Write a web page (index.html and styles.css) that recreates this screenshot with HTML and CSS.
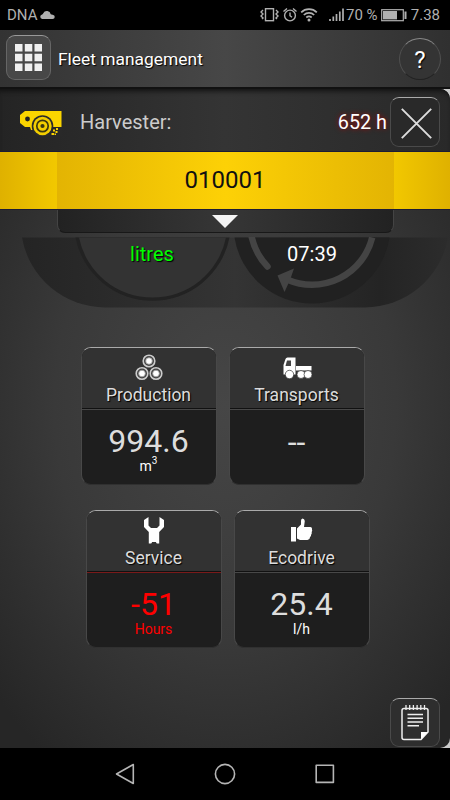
FILE: index.html
```html
<!DOCTYPE html>
<html lang="en">
<head>
  <meta charset="UTF-8" />
  <title>Fleet management</title>
  <link rel="stylesheet" href="styles.css">
</head>
<body>

  <!-- phone status bar -->
  <div class="status">
    <span class="carrier">DNA</span>
    <svg class="cloud" width="16" height="10" viewBox="0 0 15 10" preserveAspectRatio="none"><path d="M3 9h9.500a2 2 0 0 0 .3-4.200Q11.500 4.600 11 4.200A3.700 3.700 0 0 0 4 3.200Q3.600 4.300 3 4.500A2.300 2.300 0 0 0 3 9z" fill="#b0b0b0"/></svg>
    <svg class="status-icons" width="85" height="16" viewBox="0 0 85 16" fill="none" stroke="#b0b0b0" stroke-width="1.400">
      <rect x="5.500" y="1.700" width="8" height="12"/>
      <path d="M3 3l-2 2 2 2-2 2 2 2-1 1M16 3l2 2-2 2 2 2-2 2 1 1"/>
      <circle cx="30" cy="8.500" r="5.400"/>
      <path d="M30 5.500v3.200l2 1.500M23.500 4.500l3.500-3M36.500 4.500l-3.500-3"/>
      <path d="M41.200 5.300a11 11 0 0 1 15.600 0M43.800 8a7.500 7.500 0 0 1 10.400 0M46.300 10.500a4 4 0 0 1 5.400 0" stroke-width="1.700"/>
      <circle cx="49" cy="13" r="1.500" fill="#b0b0b0" stroke="none"/>
      <path d="M70 14v-2M73.300 14V9.500M76.500 14V7M79.800 14V4.500M83 14V1.500" stroke-width="1.700"/>
    </svg>
    <span class="percent">70 %</span>
    <svg class="battery" width="26" height="13" viewBox="0 0 26 13"><rect x=".7" y=".7" width="21.600" height="11" fill="none" stroke="#b0b0b0" stroke-width="1.200"/><rect x="2" y="2" width="14" height="8.400" fill="#b0b0b0"/><path d="M24.500 2.500v7.500" stroke="#b0b0b0" stroke-width="2"/></svg>
    <span class="clock">7.38</span>
  </div>

  <div class="header">
    <div class="btn menu-btn">
      <svg width="27" height="27" viewBox="0 0 27 27"><path d="M0 0h7.500v7.500H0zM9.800 0h7.500v7.500H9.800zM19.500 0H27v7.500h-7.500zM0 9.800h7.500v7.500H0zM9.800 9.800h7.500v7.500H9.800zM19.500 9.800H27v7.500h-7.500zM0 19.500h7.500V27H0zM9.800 19.500h7.500V27H9.800zM19.500 19.500H27V27h-7.500z" fill="#f0f0f0"/></svg>
    </div>
    <h1>Fleet management</h1>
    <div class="help">?</div>
  </div>

  <div class="page">
    <div class="content">
      <div class="machine">
        <svg class="harvester" width="42" height="26" viewBox="0 0 42 26">
          <path d="M5 1h36.500v16H34l-1 3H11l-1-3H5L0 13V5z" fill="#fbd500"/>
          <circle cx="7.500" cy="9" r="2.400" fill="#222"/>
          <path d="M28 17h14v9H28z" fill="#292929"/>
          <circle cx="22.500" cy="16" r="10.800" fill="#2b2b2b"/>
          <circle cx="22.500" cy="16" r="9.200" fill="#f3ce00"/>
          <circle cx="22.500" cy="16" r="5.700" fill="none" stroke="#3b3710" stroke-width="1.700"/>
          <circle cx="22.500" cy="16" r="2.100" fill="#3b3710"/>
          <path d="M33 19.500h2v2h-2zM36 18h2v2h-2zM35.500 21h2v2h-2zM31.500 23h2.500v2h-2.500zM34.500 23.500H36V25h-1.500z" fill="#fbd500"/>
        </svg>
        <span class="machine-name">Harvester:</span>
        <span class="machine-hours">652 h</span>
        <div class="btn close-btn">
          <svg width="31" height="31" viewBox="0 0 31 31"><path d="M.8.8l29.400 29.400M30.200.8L.8 30.200" stroke="#ddd" stroke-width="1.900"/></svg>
        </div>
      </div>

      <div class="band"><div class="band-mid">010001</div></div>
      <div class="tab">
        <svg width="26" height="13" viewBox="0 0 26 13"><path d="M0 0h26L13 13z" fill="#f4f4f4"/></svg>
      </div>

      <!-- lower half of the gauges -->
      <div class="gauges">
        <svg class="dials" width="450" height="71" viewBox="0 237 450 71">
          <defs>
            <linearGradient id="shell" gradientUnits="userSpaceOnUse" x1="22" x2="448" y1="0" y2="0">
              <stop offset="0" stop-color="#242424"/><stop offset=".5" stop-color="#343434"/><stop offset=".84" stop-color="#242424"/><stop offset="1" stop-color="#2c2c2c"/>
            </linearGradient>
          </defs>
          <path d="M22 237.500A84.500 84.500 0 0 0 105 307.500H365A84.500 84.500 0 0 0 448 237.500z" fill="url(#shell)"/>
          <path d="M75.500 237.500A78.500 78.500 0 0 0 229.500 237.500z" fill="#222"/>
          <path d="M79 237.500A75 75 0 0 0 226 237.500z" fill="#333"/>
          <path d="M234.500 237.500A78.500 78.500 0 0 0 389.500 237.500z" fill="#212121"/>
          <path d="M251.800 237.500A62 62 0 0 0 267.500 266.500" fill="none" stroke="#444" stroke-width="6.500" stroke-linecap="round"/>
          <path d="M372.200 237.500A62 62 0 0 1 287 279.500" fill="none" stroke="#444" stroke-width="6.500"/>
          <path d="M277.500 275.500L294 268.500 290 280 284.500 292z" fill="#444"/>
        </svg>
        <span class="dial-text litres">litres</span>
        <span class="dial-text">07:39</span>
      </div>

      <div class="tiles">
        <div class="tile">
          <div class="tile-head">
            <svg width="28" height="28" viewBox="0 0 28 28" fill="#fff" stroke="#ccc" stroke-width="1.600">
              <g fill="#444"><circle cx="14" cy="7" r="5.800"/><circle cx="7" cy="19.500" r="5.800"/><circle cx="21" cy="19.500" r="5.800"/></g>
              <g stroke="#999" stroke-width=".8"><circle cx="14" cy="7" r="3.300"/><circle cx="7" cy="19.500" r="3.300"/><circle cx="21" cy="19.500" r="3.300"/></g>
            </svg>
            <span>Production</span>
          </div>
          <div class="tile-body"><b>994.6</b><small>m<sup>3</sup></small></div>
        </div>
        <div class="tile">
          <div class="tile-head">
            <svg width="30" height="28" viewBox="0 0 30 28" fill="#fff">
              <path d="M1.500 20.500V11l2-6q.5-1.500 2-1.500h8V20.500z"/>
              <path d="M3.500 12l1.500-5.500H9V12z" fill="#444"/>
              <path d="M14 12h15.500v4.500H14z"/>
              <g stroke="#333" stroke-width=".7"><circle cx="7.500" cy="20.500" r="4.200"/><circle cx="19" cy="20.500" r="4"/><circle cx="26" cy="20.500" r="4"/></g>
            </svg>
            <span>Transports</span>
          </div>
          <div class="tile-body"><b class="empty">--</b></div>
        </div>
      </div>

      <div class="tiles second">
        <div class="tile">
          <div class="tile-head late">
            <svg width="22" height="28" viewBox="0 0 22 28"><path d="M5.500 0L1 3v7l4.800 5v11.500h2.400l1-1.500h3.600l1 1.500h2.400V15L21 10V3l-4.500-3v8.500L14 11H8L5.500 8.500z" fill="#fff"/></svg>
            <span>Service</span>
          </div>
          <div class="tile-body alert"><b>-51</b><small>Hours</small></div>
        </div>
        <div class="tile">
          <div class="tile-head">
            <svg width="24" height="28" viewBox="0 0 24 28"><path d="M1 10h5v14.500H1zM7 11.500l4-4V4Q11 1.500 12.500 1.500q2 0 2.300 2.500L14 10h6.500q2 .3 1.500 2.500.6 1.400-.3 2.500.4 1.600-.6 2.700.2 1.500-1 2.300-.2 2.700-2.600 3H10L7 21.500z" fill="#fff"/></svg>
            <span>Ecodrive</span>
          </div>
          <div class="tile-body"><b>25.4</b><small>l/h</small></div>
        </div>
      </div>

      <div class="btn notes-btn">
        <svg width="30" height="37" viewBox="0 0 30 37" fill="none" stroke="#eee" stroke-width="1.500">
          <path d="M4 4.500H26q2 0 2 2V28l-7 7.500H4q-2 0-2-2V6.500q0-2 2-2z"/>
          <path d="M21 35.500V28h7z" fill="#fff" stroke="none"/>
          <path d="M6 1v5M9.700 1v5M13.400 1v5M17.100 1v5M20.800 1v5M24.500 1v5" stroke-width="1.300"/>
          <path d="M7.500 10.500h15.500M7.500 14.200h15.500M7.500 18h15.500M7.500 21.700h11.500"/>
        </svg>
      </div>
    </div>
  </div>

  <!-- android navigation -->
  <div class="nav">
    <svg width="20" height="22" viewBox="0 0 20 22" fill="none" stroke="#b5b5b5" stroke-width="1.600" stroke-linejoin="round"><path d="M18.300 1.500v19L1.500 11z"/></svg>
    <svg width="22" height="22" viewBox="0 0 22 22" fill="none" stroke="#b5b5b5" stroke-width="1.600"><circle cx="11" cy="11" r="9.600"/></svg>
    <svg width="20" height="20" viewBox="0 0 20 20" fill="none" stroke="#b5b5b5" stroke-width="1.600" stroke-linejoin="round"><rect x="1.200" y="1.200" width="17.200" height="17.200"/></svg>
  </div>

</body>
</html>
```
FILE: styles.css
```css
* {
  box-sizing: border-box;
}
body {
  margin: 0;
  width: 450px;
  height: 800px;
  overflow: hidden;
  background: #000;
  color: #ddd;
  font-family: Roboto, "Liberation Sans", sans-serif;
}
svg {
  display: block;
  flex: none;
}
.status {
  height: 30px;
  display: flex;
  align-items: center;
  padding: 0 10px 0 7px;
  color: #b0b0b0;
  font-size: 15px;
}
.carrier {
  width: 32px;
}
.status-icons {
  margin-left: 205px;
}
.percent {
  margin-left: 1px;
  width: 33px;
  font-size: 15px;
  white-space: nowrap;
}
.battery {
  margin-left: 2px;
}
.clock {
  margin-left: auto;
  font-size: 15px;
  line-height: 32px;
}
.header {
  height: 59px;
  display: flex;
  align-items: center;
  padding: 0 9px 2px 6px;
  background: linear-gradient(90deg, #333, #474747 50%, #303030);
  border-bottom: 2px solid #111;
}
h1 {
  margin: 2px auto 0 7px;
  color: #fff;
  font-size: 17.4px;
  font-weight: normal;
  text-shadow: 1px 1px 1px #000;
}
.btn {
  display: flex;
  align-items: center;
  justify-content: center;
  border: 1px solid #4a4a4a;
  border-top-color: #aaa;
  border-radius: 9px;
  background: #2e2e2e;
}
.menu-btn {
  width: 45px;
  height: 45px;
  border-color: #666;
  border-top-color: #999;
  background: #484848;
}
.help {
  width: 42px;
  height: 42px;
  margin-top: 3px;
  border: 1px solid #505050;
  border-top-color: #888;
  border-bottom-color: #222;
  border-radius: 50%;
  background: #343434;
  color: #fff;
  font-size: 24px;
  line-height: 43px;
  text-align: center;
  text-shadow: 1px 1px 1px #000;
}
.page {
  height: 659px;
  background: #ccc;
}
.content {
  height: 659px;
  border-radius: 0 10px 10px 0;
  background: radial-gradient(ellipse 310px 430px at 50% 48%, #464646, #393939 55%, #262626);
}
.machine {
  height: 62px;
  display: flex;
  align-items: center;
  padding: 0 10px 0 20px;
  border-top-right-radius: 10px;
  background: linear-gradient(90deg, #242424, #343434 50%, #292929);
  box-shadow: inset 0 5px 5px -3px #111;
}
.machine-name {
  margin-left: 18px;
  padding-top: 4px;
  color: #ccc;
  font-size: 20px;
}
.harvester {
  margin-top: 5px;
}
.machine-hours {
  margin-left: auto;
  padding-top: 4px;
  color: #fff;
  font-size: 19.8px;
  text-shadow: 0 0 5px #a00;
}
.close-btn {
  width: 50px;
  height: 50px;
  margin: 4px 0 0 3px;
  background: #292929;
}
.close-btn svg {
  margin: 3px 0 0 2px;
}
.band {
  height: 59px;
  display: flex;
  justify-content: center;
  border: solid #1c1c35;
  border-width: 1px 0;
  background: linear-gradient(90deg, #dfb100, #f2c800 57px, #f2c800 393px, #dfb100);
}
.band-mid {
  width: 337px;
  background: linear-gradient(90deg, #e3b403, #fdd106 50%, #e3b403);
  color: #111;
  font-size: 24px;
  line-height: 57px;
  text-align: center;
}
.tab {
  width: 337px;
  height: 23px;
  margin: 0 auto 0 57px;
  display: flex;
  justify-content: center;
  padding: 5px 1px 0 0;
  border: 1px solid #444;
  border-top: 0;
  border-bottom-color: #181818;
  border-radius: 0 0 8px 8px;
  background: linear-gradient(90deg, #222, #363636 50%, #222);
}
.gauges {
  position: relative;
  height: 71px;
  margin-top: 4px;
  display: flex;
  padding: 5px 0 0 72px;
}
.dials {
  position: absolute;
  top: 0;
  left: 0;
}
.dial-text {
  position: relative;
  width: 160px;
  color: #fff;
  font-size: 20px;
  line-height: 24px;
  text-align: center;
}
.litres {
  color: #0f0;
  text-shadow: 1px 1px 1px #000;
}
.tiles {
  display: flex;
  gap: 12px;
  margin: 39px 0 0 80.500px;
}
.second {
  margin: 25px 0 0 85.500px;
}
.tile {
  width: 136px;
  height: 138px;
  border: 1px solid #484848;
  border-top-color: #aaa;
  border-bottom-color: #303030;
  border-radius: 10px;
  background: #1e1e1e;
  overflow: hidden;
}
.tile-head {
  height: 62px;
  display: flex;
  flex-direction: column;
  align-items: center;
  padding-top: 6px;
  border-bottom: 1px solid #484848;
  background: #323232;
  box-shadow: inset 0 -1px 0 #111;
  font-size: 17.500px;
}
.late {
  border-bottom-color: #7a1a1a;
}
.tile-head span {
  line-height: 26px;
  text-shadow: 1px 1px 1px #000;
}
.tile-body {
  display: flex;
  flex-direction: column;
  align-items: center;
}
.tile-body b {
  margin-top: 14px;
  font-size: 32px;
  font-weight: normal;
  line-height: 34px;
}
.tile-body small {
  display: flex;
  align-items: flex-start;
  color: #fff;
  font-size: 14px;
  line-height: 16px;
}
.tile-body sup {
  margin-top: -5px;
  font-size: 10px;
}
.tile-body .empty {
  line-height: 36px;
}
.tile-body.alert b, .tile-body.alert small {
  color: #f00;
}
.notes-btn {
  width: 50px;
  height: 49px;
  margin: 50px 0 0 390px;
}
.nav {
  height: 52px;
  display: flex;
  align-items: center;
  gap: 79px;
  padding-left: 115px;
}
```
